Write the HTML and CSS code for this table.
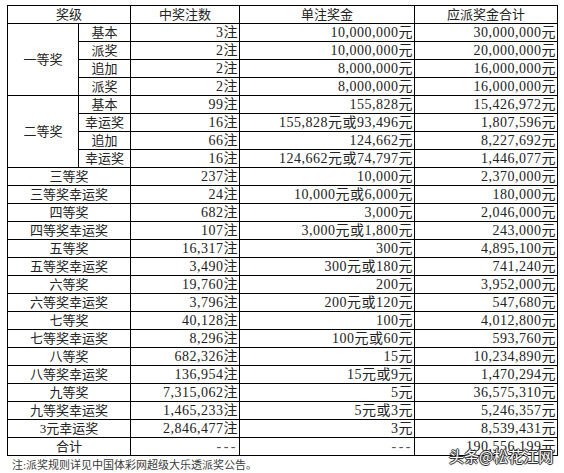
FILE: index.html
```html
<!DOCTYPE html>
<html lang="zh">
<head>
<meta charset="utf-8">
<title>大乐透派奖</title>
<link rel="stylesheet" href="styles.css">
</head>
<body>
<div class="page">
  <table class="prize">
    <colgroup>
      <col class="c1"><col class="c2"><col class="c3"><col class="c4"><col class="c5">
    </colgroup>
    <thead>
      <tr><th colspan="2">奖级</th><th>中奖注数</th><th>单注奖金</th><th>应派奖金合计</th></tr>
    </thead>
    <tbody>
      <tr><td class="ctr" rowspan="4">一等奖</td><td class="ctr">基本</td><td class="num">3注</td><td class="num">10,000,000元</td><td class="num">30,000,000元</td></tr>
      <tr><td class="ctr">派奖</td><td class="num">2注</td><td class="num">10,000,000元</td><td class="num">20,000,000元</td></tr>
      <tr><td class="ctr">追加</td><td class="num">2注</td><td class="num">8,000,000元</td><td class="num">16,000,000元</td></tr>
      <tr><td class="ctr">派奖</td><td class="num">2注</td><td class="num">8,000,000元</td><td class="num">16,000,000元</td></tr>
      <tr><td class="ctr" rowspan="4">二等奖</td><td class="ctr">基本</td><td class="num">99注</td><td class="num">155,828元</td><td class="num">15,426,972元</td></tr>
      <tr><td class="ctr">幸运奖</td><td class="num">16注</td><td class="num">155,828元或93,496元</td><td class="num">1,807,596元</td></tr>
      <tr><td class="ctr">追加</td><td class="num">66注</td><td class="num">124,662元</td><td class="num">8,227,692元</td></tr>
      <tr><td class="ctr">幸运奖</td><td class="num">16注</td><td class="num">124,662元或74,797元</td><td class="num">1,446,077元</td></tr>
      <tr><td class="ctr" colspan="2">三等奖</td><td class="num">237注</td><td class="num">10,000元</td><td class="num">2,370,000元</td></tr>
      <tr><td class="ctr" colspan="2">三等奖幸运奖</td><td class="num">24注</td><td class="num">10,000元或6,000元</td><td class="num">180,000元</td></tr>
      <tr><td class="ctr" colspan="2">四等奖</td><td class="num">682注</td><td class="num">3,000元</td><td class="num">2,046,000元</td></tr>
      <tr><td class="ctr" colspan="2">四等奖幸运奖</td><td class="num">107注</td><td class="num">3,000元或1,800元</td><td class="num">243,000元</td></tr>
      <tr><td class="ctr" colspan="2">五等奖</td><td class="num">16,317注</td><td class="num">300元</td><td class="num">4,895,100元</td></tr>
      <tr><td class="ctr" colspan="2">五等奖幸运奖</td><td class="num">3,490注</td><td class="num">300元或180元</td><td class="num">741,240元</td></tr>
      <tr><td class="ctr" colspan="2">六等奖</td><td class="num">19,760注</td><td class="num">200元</td><td class="num">3,952,000元</td></tr>
      <tr><td class="ctr" colspan="2">六等奖幸运奖</td><td class="num">3,796注</td><td class="num">200元或120元</td><td class="num">547,680元</td></tr>
      <tr><td class="ctr" colspan="2">七等奖</td><td class="num">40,128注</td><td class="num">100元</td><td class="num">4,012,800元</td></tr>
      <tr><td class="ctr" colspan="2">七等奖幸运奖</td><td class="num">8,296注</td><td class="num">100元或60元</td><td class="num">593,760元</td></tr>
      <tr><td class="ctr" colspan="2">八等奖</td><td class="num">682,326注</td><td class="num">15元</td><td class="num">10,234,890元</td></tr>
      <tr><td class="ctr" colspan="2">八等奖幸运奖</td><td class="num">136,954注</td><td class="num">15元或9元</td><td class="num">1,470,294元</td></tr>
      <tr><td class="ctr" colspan="2">九等奖</td><td class="num">7,315,062注</td><td class="num">5元</td><td class="num">36,575,310元</td></tr>
      <tr><td class="ctr" colspan="2">九等奖幸运奖</td><td class="num">1,465,233注</td><td class="num">5元或3元</td><td class="num">5,246,357元</td></tr>
      <tr><td class="ctr" colspan="2">3元幸运奖</td><td class="num">2,846,477注</td><td class="num">3元</td><td class="num">8,539,431元</td></tr>
      <tr><td class="ctr" colspan="2">合计</td><td class="num dash">---</td><td class="num dash">---</td><td class="num">190,556,199元</td></tr>
    </tbody>
  </table>
  <p class="note">注:派奖规则详见中国体彩网超级大乐透派奖公告。</p>
  <div class="watermark">头条@松花江网</div>
</div>
</body>
</html>
```
FILE: styles.css
```css
html, body {
  margin: 0;
  padding: 0;
  background: #fff;
}
.page {
  position: relative;
  width: 564px;
  height: 473px;
  padding: 5px 0 0 7px;
  box-sizing: border-box;
  font-family: "Liberation Serif", "Noto Sans CJK SC", serif;
  color: #222;
}
.prize {
  border-collapse: collapse;
  table-layout: fixed;
  width: 551px;
  font-size: 13px;
}
.c1 { width: 71px; }
.c2 { width: 52px; }
.c3 { width: 109px; }
.c4 { width: 175px; }
.c5 { width: 143px; }
.prize th,
.prize td {
  border: 1px solid #000;
  padding: 0 2px;
  height: 17px;
  line-height: 16px;
  font-weight: normal;
  white-space: nowrap;
  overflow: hidden;
}
.prize th { text-align: center; }
.prize .ctr { text-align: center; }
.prize .num {
  text-align: right;
  font-size: 14px;
  letter-spacing: 0.5px;
  padding-right: 1px;
}
.prize .dash {
  letter-spacing: 2.5px;
  color: #555;
}
.note {
  margin: 3px 0 0 5px;
  font-size: 11px;
  line-height: 12px;
  color: #3a3a3a;
}
.watermark {
  position: absolute;
  left: 449px;
  top: 447px;
  font-family: "Noto Sans CJK SC", sans-serif;
  font-size: 15px;
  line-height: 18px;
  color: #fff;
  text-shadow: 1px 0 0 #333, -1px 0 0 #333, 0 1px 0 #333, 0 -1px 0 #333, 0 0 2px #000;
}
```
